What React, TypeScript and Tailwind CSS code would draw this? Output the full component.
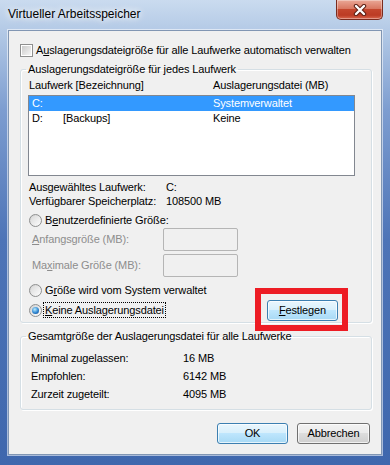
function Radio({ checked = false }: { checked?: boolean }) {
  return (
    <span className="flex items-center justify-center w-[13px] h-[13px] shrink-0 rounded-full border border-[#8e8f8f] bg-[linear-gradient(135deg,#cfcfcf,#ffffff)]">
      {checked ? (
        <span className="w-[7px] h-[7px] rounded-full bg-[radial-gradient(circle_at_40%_35%,#b9ecff,#2f86d1_55%,#0d3f80)]" />
      ) : (
        <span className="w-[9px] h-[9px] rounded-full bg-[linear-gradient(135deg,#dadada,#fafafa)]" />
      )}
    </span>
  )
}

function Checkbox() {
  return (
    <span className="flex items-center justify-center w-[13px] h-[13px] shrink-0 border border-[#8e8f8f] bg-white">
      <span className="w-[9px] h-[9px] bg-[linear-gradient(135deg,#cbcbcb,#f6f6f6)]" />
    </span>
  )
}

function WinButton({ label, wide, blue }: { label: React.ReactNode; wide?: boolean; blue?: boolean }) {
  return (
    <div
      className={
        (wide ? 'w-[73px] ' : 'w-[71px] ') +
        (blue
          ? 'border-[#3c7fb1] bg-[linear-gradient(#eaf6fd,#d9f0fc_45%,#bee6fd_50%,#a7d9f5)] '
          : 'border-[#707070] bg-[linear-gradient(#f2f2f2,#ebebeb_45%,#dddddd_50%,#cfcfcf)] ') +
        'h-[21px] flex items-center justify-center rounded-[3px] border shadow-[inset_0_0_0_1px_rgba(255,255,255,0.7)] text-black'
      }
    >
      {label}
    </div>
  )
}

function GroupBox({ title, children, className }: { title: string; children: React.ReactNode; className?: string }) {
  return (
    <fieldset
      className={
        'w-[352px] border border-[#d5dfe5] rounded-[3px] shadow-[1px_1px_0_#ffffff,inset_1px_1px_0_#ffffff] px-[7px] ' +
        (className ?? '')
      }
    >
      <legend className="px-[2px] -ml-[2px] leading-[15px]">{title}</legend>
      {children}
    </fieldset>
  )
}

export default function App() {
  return (
    <div className="w-[390px] h-[465px] overflow-hidden flex flex-col bg-[linear-gradient(180deg,#cadbef_0px,#b4cae6_30px,#7d9dd0_110px,#4d74b7_240px,#3f67ad_465px)] font-['Liberation_Sans',Arial,sans-serif] text-[11px] tracking-[-0.12px] text-black">
      {/* title bar */}
      <div className="h-[30px] flex shrink-0">
        <div className="flex-1 pl-[8px] pt-[6px] text-[12px] leading-[16px] tracking-normal [text-shadow:0_0_6px_#ffffff,0_0_10px_#ffffff]">
          Virtueller Arbeitsspeicher
        </div>
        <div className="mr-[7px] w-[47px] h-[20px] flex items-center justify-center rounded-b-[5px] border border-t-0 border-[#7a2b1e] bg-[linear-gradient(#eaa897,#d97862_45%,#c4462d_50%,#bc3b24_80%,#d9684f)] shadow-[inset_0_0_0_1px_rgba(255,255,255,0.35)]">
          <svg width="14" height="12" viewBox="0 0 14 12">
            <path d="M3 2 L11 10 M11 2 L3 10" stroke="#5b1f14" strokeWidth="4.4" strokeLinecap="round" />
            <path d="M3 2 L11 10 M11 2 L3 10" stroke="#ffffff" strokeWidth="2.4" strokeLinecap="round" />
          </svg>
        </div>
      </div>

      {/* client area */}
      <div className="mx-[8px] h-[425px] shrink-0 bg-[#f0f0f0] border border-[#8196b3] shadow-[0_0_0_1px_rgba(255,255,255,0.55)] pl-[11px] pt-[12px]">
        <div className="flex items-center h-[15px]">
          <Checkbox />
          <span className="ml-[3px]">
            A<u>u</u>slagerungsdateigröße für alle Laufwerke automatisch verwalten
          </span>
        </div>

        <GroupBox title="Auslagerungsdateigröße für jedes Laufwerk" className="mt-[4px] pb-[1px]">
          <div className="mt-[1px] flex h-[15px] items-center pl-[1px]">
            <span className="w-[184px]">Laufwerk [Bezeichnung]</span>
            <span>Auslagerungsdatei (MB)</span>
          </div>

          <div className="mt-[2px] w-[327px] h-[81px] border border-[#828790] bg-white">
            <div className="flex h-[15px] items-center pl-[3px] bg-[#3399ff] text-white">
              <span className="w-[181px]">C:</span>
              <span>Systemverwaltet</span>
            </div>
            <div className="flex h-[15px] items-center pl-[3px]">
              <span className="w-[31px]">D:</span>
              <span className="w-[150px]">[Backups]</span>
              <span>Keine</span>
            </div>
          </div>

          <div className="mt-[4px] pl-[1px] leading-[14px]">
            <div className="flex">
              <span className="w-[137px]">Ausgewähltes Laufwerk:</span>
              <span>C:</span>
            </div>
            <div className="flex">
              <span className="w-[137px]">Verfügbarer Speicherplatz:</span>
              <span>108500 MB</span>
            </div>
          </div>

          <div className="mt-[5px] flex h-[14px] items-center pl-[1px]">
            <Radio />
            <span className="ml-[3px]">
              B<u>e</u>nutzerdefinierte Größe:
            </span>
          </div>

          <div className="mt-[1px] flex h-[23px] items-center pl-[4px] text-[#8d8d8d]">
            <span className="w-[131px]">
              <u>A</u>nfangsgröße (MB):
            </span>
            <div className="w-[75px] h-[23px] rounded-[2px] border border-[#b5b5b5] bg-[#f0f0f0]" />
          </div>

          <div className="mt-[3px] flex h-[23px] items-center pl-[4px] text-[#8d8d8d]">
            <span className="w-[131px]">
              Ma<u>x</u>imale Größe (MB):
            </span>
            <div className="w-[75px] h-[23px] rounded-[2px] border border-[#b5b5b5] bg-[#f0f0f0]" />
          </div>

          <div className="mt-[6px] flex h-[14px] items-center pl-[1px]">
            <Radio />
            <span className="ml-[3px]">
              G<u>r</u>öße wird vom System verwaltet
            </span>
          </div>

          <div className="mt-[2px] flex h-[22px] items-center justify-between pl-[1px]">
            <div className="flex items-center">
              <Radio checked />
              <span className="ml-[1px] px-[1px] leading-[14px] border border-dotted border-black">
                <u>K</u>eine Auslagerungsdatei
              </span>
            </div>
            <div className="relative mr-[26px]">
              <WinButton
                blue
                label={
                  <span>
                    <u>F</u>estlegen
                  </span>
                }
              />
              <div className="absolute left-[-12px] top-[-12px] w-[93px] h-[43px] border-[6px] border-[#ed1c24]" />
            </div>
          </div>
        </GroupBox>

        <GroupBox title="Gesamtgröße der Auslagerungsdatei für alle Laufwerke" className="mt-[6px] pb-[6px]">
          <div className="mt-[5px] pl-[3px]">
            <div className="flex h-[18px] items-center">
              <span className="w-[152px]">Minimal zugelassen:</span>
              <span>16 MB</span>
            </div>
            <div className="flex h-[18px] items-center">
              <span className="w-[152px]">Empfohlen:</span>
              <span>6142 MB</span>
            </div>
            <div className="flex h-[18px] items-center">
              <span className="w-[152px]">Zurzeit zugeteilt:</span>
              <span>4095 MB</span>
            </div>
          </div>
        </GroupBox>

        <div className="mt-[13px] w-[352px] flex justify-end gap-[9px] pr-[2px]">
          <WinButton blue label="OK" />
          <WinButton wide label="Abbrechen" />
        </div>
      </div>
    </div>
  )
}
